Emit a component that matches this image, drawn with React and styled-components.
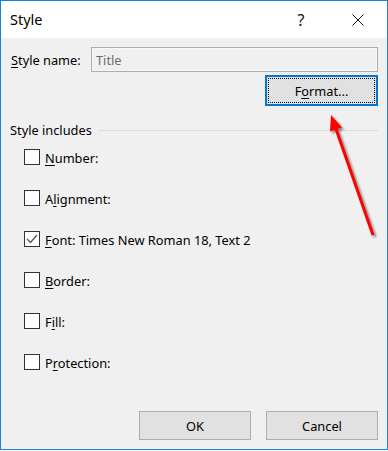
import React from "react";
import styled, { createGlobalStyle } from "styled-components";

const Global = createGlobalStyle`
  html, body { margin: 0; padding: 0; background: #ffffff; }
  body { font-family: "Noto Sans", "Open Sans", sans-serif; }
`;

const Window = styled.div`
  position: relative;
  width: 388px;
  height: 450px;
  box-sizing: border-box;
  border: 1px solid #1883d7;
  display: flex;
  flex-direction: column;
  background: #f0f0f0;
  color: #000;
  font-size: 12.8px;
`;

const TitleBar = styled.div`
  height: 37px;
  background: #ffffff;
  display: flex;
  align-items: center;
  padding-left: 9px;
  flex-shrink: 0;
`;

const Title = styled.div`
  font-size: 14.5px;
  flex: 1;
  padding-bottom: 1px;
`;

const TitleButton = styled.div`
  width: ${(p) => p.$w}px;
  height: 37px;
  display: flex;
  align-items: center;
  justify-content: center;
  font-size: 16px;
  color: #111;
`;

const Body = styled.div`
  flex: 1;
  display: flex;
  flex-direction: column;
  padding: 9px 9px 9px 9px;
`;

const NameRow = styled.div`
  display: flex;
  align-items: center;
  height: 25px;
`;

const Label = styled.label`
  width: 80px;
  flex-shrink: 0;
  padding-left: 1px;
  white-space: nowrap;
`;

const Key = styled.span`
  text-decoration: underline;
  text-underline-offset: 2px;
  text-decoration-thickness: 1px;
`;

const NameInput = styled.div`
  flex: 1;
  height: 25px;
  box-sizing: border-box;
  border: 1px solid #adadad;
  box-shadow: inset 0 0 0 1px #f7f7f7;
  background: #f0f0f0;
  color: #6d6d6d;
  display: flex;
  align-items: center;
  padding-left: 4px;
`;

const FormatRow = styled.div`
  display: flex;
  justify-content: flex-end;
  margin-top: 3px;
`;

const FormatButton = styled.div`
  width: 113px;
  height: 31px;
  box-sizing: border-box;
  border: 2px solid #0078d7;
  padding: 1px;
  background: #e1e1e1;
  display: flex;
`;

const FocusRing = styled.div`
  flex: 1;
  border: 1px dotted #000;
  display: flex;
  align-items: center;
  justify-content: center;
`;

const GroupHeader = styled.div`
  display: flex;
  align-items: center;
  gap: 6px;
  margin-top: 16px;
  height: 16px;
`;

const GroupLine = styled.div`
  flex: 1;
  height: 1px;
  background: #dcdcdc;
  margin-top: 1px;
`;

const Options = styled.div`
  display: flex;
  flex-direction: column;
  gap: 25px;
  margin-top: 11px;
  padding-left: 14px;
`;

const OptionRow = styled.div`
  display: flex;
  align-items: center;
  gap: 5px;
  height: 16px;
`;

const Box = styled.div`
  width: 16px;
  height: 16px;
  box-sizing: border-box;
  border: 1px solid #333;
  background: #fff;
  display: flex;
  align-items: center;
  justify-content: center;
`;

const OptionText = styled.span`
  padding-top: 1px;
  white-space: nowrap;
`;

const Footer = styled.div`
  margin-top: auto;
  display: flex;
  justify-content: flex-end;
  gap: 15px;
`;

const Button = styled.div`
  width: 112px;
  height: 29px;
  box-sizing: border-box;
  border: 1px solid #adadad;
  background: #e1e1e1;
  display: flex;
  align-items: center;
  justify-content: center;
`;

const ArrowLayer = styled.svg`
  position: absolute;
  left: -1px;
  top: -1px;
  pointer-events: none;
`;

const Check = () => (
  <svg width="12" height="10" viewBox="0 0 12 10">
    <polyline points="1,5 4.5,8.5 11,1" fill="none" stroke="#555" strokeWidth="1.3" />
  </svg>
);

const Option = ({ checked, pre, k, post }) => (
  <OptionRow>
    <Box>{checked && <Check />}</Box>
    <OptionText>
      {pre}
      <Key>{k}</Key>
      {post}
    </OptionText>
  </OptionRow>
);

export default function App() {
  return (
    <>
      <Global />
      <Window>
        <TitleBar>
          <Title>Style</Title>
          <TitleButton $w={56}>?</TitleButton>
          <TitleButton $w={58}>
            <svg width="12" height="12" viewBox="0 0 12 12">
              <path d="M0.5 0.5 L11.5 11.5 M11.5 0.5 L0.5 11.5" stroke="#111" strokeWidth="1" />
            </svg>
          </TitleButton>
        </TitleBar>
        <Body>
          <NameRow>
            <Label>
              <Key>S</Key>tyle name:
            </Label>
            <NameInput>Title</NameInput>
          </NameRow>
          <FormatRow>
            <FormatButton>
              <FocusRing>
                <span>
                  F<Key>o</Key>rmat...
                </span>
              </FocusRing>
            </FormatButton>
          </FormatRow>
          <GroupHeader>
            <span>Style includes</span>
            <GroupLine />
          </GroupHeader>
          <Options>
            <Option k="N" post="umber:" />
            <Option pre="A" k="l" post="ignment:" />
            <Option checked k="F" post="ont: Times New Roman 18, Text 2" />
            <Option k="B" post="order:" />
            <Option pre="F" k="i" post="ll:" />
            <Option pre="P" k="r" post="otection:" />
          </Options>
          <Footer>
            <Button>OK</Button>
            <Button>Cancel</Button>
          </Footer>
        </Body>
        <ArrowLayer width="388" height="451" viewBox="0 0 388 451">
          <defs>
            <filter id="sh" x="-50%" y="-50%" width="200%" height="200%">
              <feDropShadow dx="2" dy="2" stdDeviation="1.2" floodColor="#000" floodOpacity="0.45" />
            </filter>
          </defs>
          <g filter="url(#sh)">
            <line x1="373" y1="235" x2="335" y2="126" stroke="#ff0000" strokeWidth="3" />
            <polygon points="331,115 342,127.5 330,131.5" fill="#ff0000" />
          </g>
        </ArrowLayer>
      </Window>
    </>
  );
}
